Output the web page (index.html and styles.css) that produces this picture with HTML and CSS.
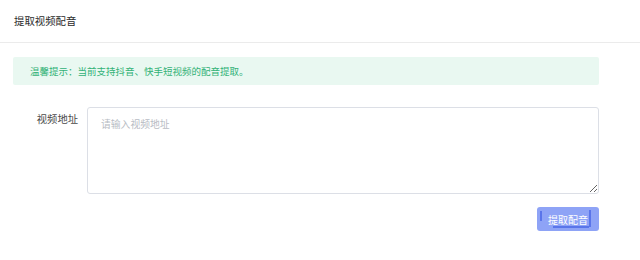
FILE: index.html
```html
<!DOCTYPE html>
<html lang="zh">
<head>
<meta charset="utf-8">
<link rel="stylesheet" href="styles.css">
</head>
<body>
<div class="header">提取视频配音</div>
<div class="content">
  <div class="alert">温馨提示：当前支持抖音、快手短视频的配音提取。</div>
  <div class="form-row">
    <label class="label">视频地址</label>
    <textarea class="input" placeholder="请输入视频地址"></textarea>
  </div>
  <div class="actions">
    <button class="btn">提取配音</button>
  </div>
</div>
</body>
</html>
```
FILE: styles.css
```css
html, body {
  margin: 0;
  padding: 0;
  background: #fff;
  font-family: "Noto Sans CJK SC", "Noto Sans", sans-serif;
}
.header {
  height: 42px;
  line-height: 42px;
  padding-left: 14px;
  font-size: 10.4px;
  color: #2b2b2b;
  border-bottom: 1px solid #ebebeb;
}
.content {
  padding: 14px 41px 0 13px;
}
.alert {
  height: 28px;
  line-height: 28px;
  padding-left: 17px;
  background: #e9f8f1;
  color: #31b276;
  font-size: 9.5px;
  border-radius: 2px;
}
.form-row {
  display: flex;
  margin-top: 22px;
}
.label {
  width: 65px;
  padding-right: 9px;
  text-align: right;
  font-size: 10.3px;
  color: #4a4a4a;
  padding-top: 4px;
}
.input {
  flex: 1;
  height: 87px;
  box-sizing: border-box;
  border: 1px solid #dcdfe6;
  border-radius: 3px;
  padding: 9px 13px;
  font-family: inherit;
  font-size: 9.8px;
  color: #333;
  resize: vertical;
  outline: none;
}
.input::placeholder {
  color: #b8bcc4;
}
.actions {
  display: flex;
  justify-content: flex-end;
  margin-top: 13px;
}
.btn {
  width: 62px;
  height: 24px;
  border: none;
  border-radius: 3px;
  color: #fff;
  font-family: inherit;
  font-size: 10px;
  padding: 0;
  background:
    linear-gradient(#5a75ea, #5a75ea) 3px 4px / 2px 10px no-repeat,
    linear-gradient(#5a75ea, #5a75ea) 52px 3px / 2px 17px no-repeat,
    linear-gradient(#5a75ea, #5a75ea) 16px 19px / 36px 2px no-repeat,
    #8ea3f6;
}
```
